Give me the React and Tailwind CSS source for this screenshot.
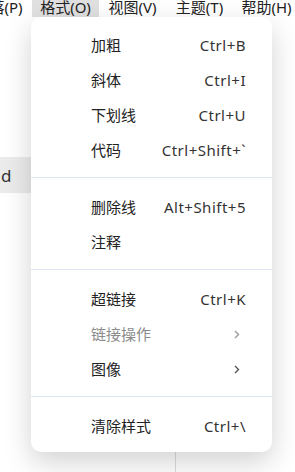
import React from 'react'

const FONT = { fontFamily: '"Noto Sans", "Noto Sans CJK SC", sans-serif' }

const groups = [
    [
        { label: '加粗', key: 'Ctrl+B' },
        { label: '斜体', key: 'Ctrl+I' },
        { label: '下划线', key: 'Ctrl+U' },
        { label: '代码', key: 'Ctrl+Shift+`' },
    ],
    [
        { label: '删除线', key: 'Alt+Shift+5' },
        { label: '注释' },
    ],
    [
        { label: '超链接', key: 'Ctrl+K' },
        { label: '链接操作', sub: true, disabled: true },
        { label: '图像', sub: true },
    ],
    [{ label: '清除样式', key: 'Ctrl+\\' }],
]

function Chevron({ muted }) {
    return (
        <svg width="6" height="9" viewBox="0 0 6 9" className={muted ? 'text-[#9a9a9a]' : 'text-[#555]'}>
            <path d="M1 1l3.5 3.5L1 8" fill="none" stroke="currentColor" strokeWidth="1.4" />
        </svg>
    )
}

function MenuItem({ item }) {
    return (
        <div className="flex items-center justify-between h-[35px] pl-[60px] pr-[26px] text-[15px]">
            <span className={item.disabled ? 'text-[#8a8a8a]' : 'text-[#222]'}>{item.label}</span>
            {item.key && <span className="text-[#333] tracking-[0.5px]">{item.key}</span>}
            {item.sub && (
                <span className="pr-[6px]">
                    <Chevron muted={item.disabled} />
                </span>
            )}
        </div>
    )
}

export default function App() {
    const bar = ['段落(P)', '格式(O)', '视图(V)', '主题(T)', '帮助(H)']

    return (
        <div className="relative w-[295px] h-[472px] bg-white overflow-hidden" style={FONT}>
            {/* Menu bar */}
            <div className="flex h-[17px] ml-[-35px] text-[15px] text-[#222] overflow-hidden">
                {bar.map((t) => (
                    <div
                        key={t}
                        className={`flex items-end w-[67px] shrink-0 justify-center ${t === '格式(O)' ? 'bg-[#e0e0e0]' : ''}`}
                    >
                        <span className="leading-[20px] whitespace-nowrap">{t}</span>
                    </div>
                ))}
            </div>

            {/* Page behind */}
            <div className="flex h-[455px]">
                <div className="w-[176px] border-r border-[#dcdcdc] pt-[140px]">
                    <div className="h-[36px] bg-[#ebebeb] flex items-center text-[17px] text-[#333] leading-none pl-px">
                        d
                    </div>
                </div>
                <div className="flex-1" />
            </div>

            {/* Dropdown */}
            <div className="absolute left-[31px] top-[17px] w-[241px] h-[435px] bg-white rounded-[10px] shadow-[0_10px_28px_rgba(0,0,0,0.18)] pt-[11px]">
                {groups.map((g, i) => (
                    <div key={i}>
                        {i > 0 && <div className="h-px bg-[#dde5f2] mt-[9px] mb-[12px]" />}
                        {g.map((item) => (
                            <MenuItem key={item.label} item={item} />
                        ))}
                    </div>
                ))}
            </div>
        </div>
    )
}
